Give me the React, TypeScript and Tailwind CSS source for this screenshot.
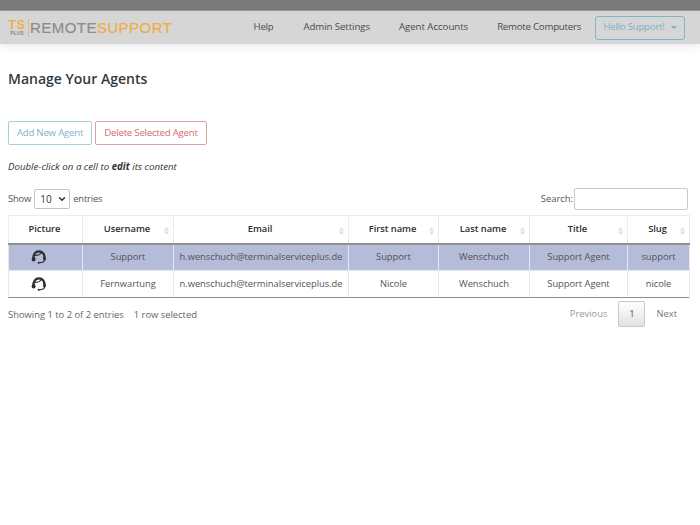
import { ChevronDown } from "lucide-react";

const columns = [
  { name: "Picture", width: "w-[74px]", sort: false },
  { name: "Username", width: "w-[91px]", sort: true },
  { name: "Email", width: "w-[175px]", sort: true },
  { name: "First name", width: "w-[90px]", sort: true },
  { name: "Last name", width: "w-[91px]", sort: true },
  { name: "Title", width: "w-[98px]", sort: true },
  { name: "Slug", width: "w-[62px]", sort: true },
];

const agents = [
  {
    username: "Support",
    email: "h.wenschuch@terminalserviceplus.de",
    first: "Support",
    last: "Wenschuch",
    title: "Support Agent",
    slug: "support",
    selected: true,
  },
  {
    username: "Fernwartung",
    email: "n.wenschuch@terminalserviceplus.de",
    first: "Nicole",
    last: "Wenschuch",
    title: "Support Agent",
    slug: "nicole",
    selected: false,
  },
];

const SortArrows = () => (
  <svg width="5" height="8" viewBox="0 0 5 8" className="absolute right-[4px] top-[11px]">
    <path d="M2.5 0 L5 3.4 H0 Z" fill="#e0e0e0" />
    <path d="M2.5 8 L5 4.6 H0 Z" fill="#e0e0e0" />
  </svg>
);

const AgentIcon = () => (
  <svg width="16" height="16" viewBox="0 0 16 16" className="ml-[22px] block" fill="none">
    <path d="M2.6 10 C2 5.2 4.6 2.4 8 2.4 C11.4 2.4 14 5.2 13.4 10" stroke="#2b2d33" strokeWidth="2.3" />
    <path d="M4 6.4 C6 6.6 8.6 6 10 4" stroke="#2b2d33" strokeWidth="1.3" />
    <path d="M13.7 10 C13.7 12.8 11.4 13.8 8 13.8" stroke="#2b2d33" strokeWidth="1.2" />
    <ellipse cx="2.6" cy="10.2" rx="1.9" ry="2.2" fill="#2b2d33" />
    <ellipse cx="13.5" cy="9.8" rx="1.4" ry="1.7" fill="#2b2d33" />
    <circle cx="7.6" cy="13.7" r="1" fill="#2b2d33" />
  </svg>
);

const Logo = () => (
  <div className="flex items-center font-['Liberation_Sans',sans-serif] leading-none">
    <div className="flex flex-col items-center w-[18px]">
      <span className="text-[12.5px] font-bold text-[#eeb14a] leading-[10px] tracking-[0.8px]">TS</span>
      <span className="text-[5px] font-bold text-[#8a8a8a] leading-[5px] mt-[1px]">PLUS</span>
    </div>
    <div className="w-px h-[18px] bg-[#e5bc78] ml-[2px] mr-[1px]" />
    <span className="text-[15px] text-[#8c8c8c] tracking-[0.45px] [-webkit-text-stroke:0.2px_#8c8c8c]">REMOTE</span>
    <span className="text-[15px] text-[#efae43] tracking-[0.45px] [-webkit-text-stroke:0.2px_#efae43]">SUPPORT</span>
  </div>
);

const App = () => {
  return (
    <div className="w-[700px] h-[525px] bg-white overflow-hidden font-['Open_Sans',sans-serif] text-[#212529]">
      <div className="h-[11px] bg-[#7b7b7b] border-b border-[#9a9a9a]" />
      <nav className="h-[33px] bg-[#d6d6d6] flex items-center pl-[8px] pr-[15px] shadow-[0_3px_8px_rgba(0,0,0,0.08)]">
        <Logo />
        <div className="flex items-center ml-auto text-[9.7px] tracking-[-0.25px] text-[#4a4a4a]">
          <span className="mr-[30px]">Help</span>
          <span className="mr-[29px] tracking-[-0.1px]">Admin Settings</span>
          <span className="mr-[29px] tracking-[-0.05px]">Agent Accounts</span>
          <span className="mr-[14px]">Remote Computers</span>
          <button className="h-[24px] w-[90px] rounded-[3px] border border-[#7fb3c8] text-[#7fb0c6] flex items-center justify-center gap-[6px]">
            Hello Support!
            <span className="w-0 h-0 border-x-[3px] border-x-transparent border-t-[3px] border-t-[#7fb0c6]" />
          </button>
        </div>
      </nav>

      <main className="px-[8px]">
        <h1 className="mt-[25px] text-[14px] leading-[20px] font-semibold text-[#343a40]">Manage Your Agents</h1>

        <div className="flex gap-[3px] mt-[32px] text-[9.7px] tracking-[-0.25px]">
          <button className="h-[24px] w-[84px] rounded-[2px] border border-[#a5d0e0] text-[#7fb3cc]">
            Add New Agent
          </button>
          <button className="h-[24px] w-[112px] rounded-[2px] border border-[#e3a0a0] text-[#d9696f]">
            Delete Selected Agent
          </button>
        </div>

        <p className="mt-[15px] text-[9.7px] leading-[14px] italic text-[#333]">
          Double-click on a cell to <b>edit</b> its content
        </p>

        <div className="flex items-center justify-between mt-[14px] text-[9.4px] text-[#555] pr-[4px]">
          <div className="flex items-center gap-[3px]">
            <span className="tracking-[-0.15px]">Show</span>
            <div className="w-[36px] h-[20px] border border-[#c4c4c4] rounded-[2px] flex items-center justify-between pl-[5px] pr-[2px] text-[#333] text-[10px]">
              10
              <ChevronDown size={10} strokeWidth={3.5} className="text-[#333]" />
            </div>
            <span className="tracking-[-0.15px]">entries</span>
          </div>
          <div className="flex items-center gap-px">
            <span>Search:</span>
            <div className="w-[114px] h-[22px] border border-[#c8c8c8] rounded-[2px] bg-white" />
          </div>
        </div>

        <table className="mt-[5px] w-[681px] table-fixed border-collapse text-[9.4px] tracking-[-0.05px]">
          <thead>
            <tr className="h-[28px]">
              {columns.map((c) => (
                <th
                  key={c.name}
                  className={`${c.width} relative border border-[#ececec] border-b-2 border-b-[#8f8f8f] font-semibold text-[#2f2f2f] text-center pr-[2px]`}
                >
                  {c.name}
                  {c.sort && <SortArrows />}
                </th>
              ))}
            </tr>
          </thead>
          <tbody className="text-[#555]">
            {agents.map((a) => (
              <tr key={a.email} className={`h-[27px] ${a.selected ? "bg-[#b4bcd9]" : "bg-white"}`}>
                <td className="border border-[#e6e8ee]">
                  <AgentIcon />
                </td>
                <td className="border border-[#e6e8ee] text-center">{a.username}</td>
                <td className="border border-[#e6e8ee] text-center whitespace-nowrap">{a.email}</td>
                <td className="border border-[#e6e8ee] text-center">{a.first}</td>
                <td className="border border-[#e6e8ee] text-center">{a.last}</td>
                <td className="border border-[#e6e8ee] text-center">{a.title}</td>
                <td className="border border-[#e6e8ee] text-center">{a.slug}</td>
              </tr>
            ))}
          </tbody>
        </table>
        <div className="h-px w-[681px] bg-[#8f8f8f] -mt-px relative" />

        <div className="flex items-center justify-between w-[681px] mt-[3px] text-[9.4px] text-[#666]">
          <div className="pt-[2px]">
            Showing 1 to 2 of 2 entries<span className="ml-[10px]">1 row selected</span>
          </div>
          <div className="flex items-center">
            <span className="text-[#999] mr-[11px]">Previous</span>
            <span className="w-[27px] h-[26px] flex items-center justify-center border border-[#c9c9c9] rounded-[2px] bg-gradient-to-b from-white to-[#e2e2e2] text-[#555]">
              1
            </span>
            <span className="text-[#777] ml-[11px] mr-[12px]">Next</span>
          </div>
        </div>
      </main>
    </div>
  );
};

export default App;
